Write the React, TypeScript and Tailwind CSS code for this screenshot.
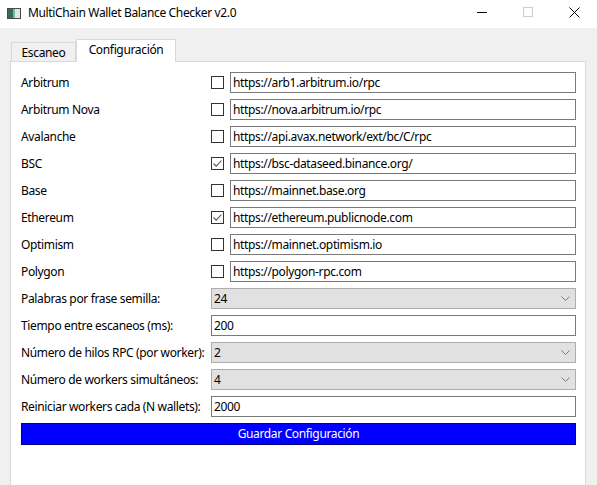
const chains = [
  { name: "Arbitrum", url: "https://arb1.arbitrum.io/rpc", on: false },
  { name: "Arbitrum Nova", url: "https://nova.arbitrum.io/rpc", on: false },
  { name: "Avalanche", url: "https://api.avax.network/ext/bc/C/rpc", on: false },
  { name: "BSC", url: "https://bsc-dataseed.binance.org/", on: true },
  { name: "Base", url: "https://mainnet.base.org", on: false },
  { name: "Ethereum", url: "https://ethereum.publicnode.com", on: true },
  { name: "Optimism", url: "https://mainnet.optimism.io", on: false },
  { name: "Polygon", url: "https://polygon-rpc.com", on: false },
];

const settings = [
  { label: "Palabras por frase semilla:", value: "24", select: true },
  { label: "Tiempo entre escaneos (ms):", value: "200", select: false },
  { label: "Número de hilos RPC (por worker):", value: "2", select: true },
  { label: "Número de workers simultáneos:", value: "4", select: true },
  { label: "Reiniciar workers cada (N wallets):", value: "2000", select: false },
];

const Check = ({ on }: { on: boolean }) => (
  <span className="w-[13px] h-[13px] shrink-0 border border-[#333333] bg-white flex items-center justify-center mr-[6px]">
    {on && (
      <svg width="11" height="11" viewBox="0 0 11 11">
        <path d="M1.5 5.5 L4.2 8.2 L9.5 2.5" fill="none" stroke="#555" strokeWidth="1.1" />
      </svg>
    )}
  </span>
);

const TextBox = ({ value }: { value: string }) => (
  <div className="flex-1 h-[21px] border border-[#7a7a7a] bg-white flex items-center pl-[2px] leading-none">
    {value}
  </div>
);

const DropDown = ({ value }: { value: string }) => (
  <div className="flex-1 h-[21px] border border-[#adadad] bg-[#e1e1e1] flex items-center justify-between pl-[2px] pr-[5px] leading-none">
    <span>{value}</span>
    <svg width="9" height="5" viewBox="0 0 9 5">
      <path d="M0.5 0.5 L4.5 4.5 L8.5 0.5" fill="none" stroke="#7a7a7a" strokeWidth="1" />
    </svg>
  </div>
);

export default function App() {
  return (
    <div className="w-[597px] h-[485px] overflow-hidden bg-[#f0f0f0] text-[12px] tracking-[-0.35px] text-black whitespace-nowrap font-['Noto_Sans',sans-serif]">
      {/* title bar */}
      <div className="h-[28px] bg-white flex items-center">
        <svg width="14" height="11" viewBox="0 0 14 11" className="ml-[7px] mt-[-2px]">
          <rect x="0" y="0" width="14" height="11" fill="#4a4a4a" />
          <rect x="1" y="1" width="12" height="9" fill="#dfe6e6" />
          <rect x="1" y="1" width="5" height="9" fill="#2f6f5a" />
          <rect x="6" y="1" width="2" height="9" fill="#7fb3a6" />
        </svg>
        <span className="ml-[7px] mt-[-2px]">MultiChain Wallet Balance Checker v2.0</span>
        <div className="ml-auto flex h-full">
          <div className="w-[46px] flex items-center justify-center">
            <span className="block w-[10px] h-px bg-black mt-[-4px]" />
          </div>
          <div className="w-[46px] flex items-center justify-center">
            <span className="block w-[10px] h-[10px] border border-[#cccccc] mt-[-4px]" />
          </div>
          <div className="w-[46px] flex items-center justify-center">
            <svg width="11" height="11" viewBox="0 0 11 11" className="mt-[-4px]">
              <path d="M0.5 0.5 L10.5 10.5 M10.5 0.5 L0.5 10.5" stroke="#000" strokeWidth="1" />
            </svg>
          </div>
        </div>
      </div>

      <div className="pt-[11px] pl-[10px] pr-[11px]">
        {/* tabs */}
        <div className="flex items-end h-[22px] pl-[1px]">
          <div className="w-[65px] h-[19px] border border-b-0 border-[#d9d9d9] bg-[#f0f0f0] flex items-center justify-center pt-[1px]">
            Escaneo
          </div>
          <div className="relative z-10 w-[100px] h-[23px] -mb-px border border-b-0 border-[#d9d9d9] bg-white flex items-center justify-center pb-[3px]">
            Configuración
          </div>
        </div>

        {/* pane */}
        <div className="h-[440px] border border-[#d9d9d9] bg-white pt-[10px] pl-[10px] pr-[9px]">
          <div className="grid grid-cols-[190px_1fr] gap-y-[6px]">
            {chains.map((c) => (
              <div key={c.name} className="contents">
                <div className="h-[21px] flex items-center">{c.name}</div>
                <div className="h-[21px] flex items-center">
                  <Check on={c.on} />
                  <TextBox value={c.url} />
                </div>
              </div>
            ))}
            {settings.map((s) => (
              <div key={s.label} className="contents">
                <div className="h-[21px] flex items-center">{s.label}</div>
                <div className="h-[21px] flex items-center">
                  {s.select ? <DropDown value={s.value} /> : <TextBox value={s.value} />}
                </div>
              </div>
            ))}
            <button className="col-span-2 h-[22px] bg-[#0000ff] border border-[#000080] text-white flex items-center justify-center">
              Guardar Configuración
            </button>
          </div>
        </div>
      </div>
    </div>
  );
}
